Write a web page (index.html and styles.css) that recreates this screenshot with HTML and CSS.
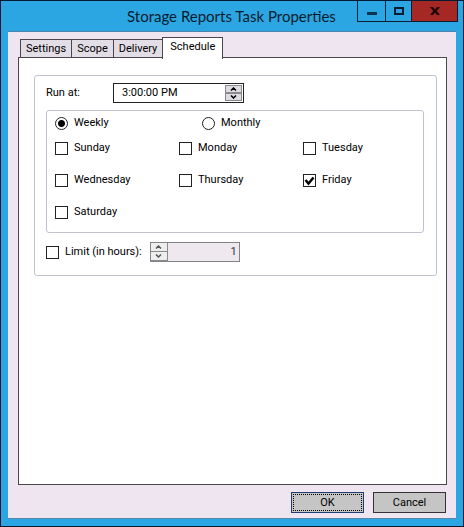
FILE: index.html
```html
<!DOCTYPE html>
<html lang="en">
<head>
<meta charset="utf-8">
<title>Storage Reports Task Properties</title>
<link rel="stylesheet" href="styles.css">
</head>
<body>
<main class="window">
  <header class="titlebar">
    <h1 class="title">Storage Reports Task Properties</h1>
    <div class="window-controls">
      <button class="control" type="button" aria-label="Minimize"><svg width="10" height="10" viewBox="0 0 10 10"><path d="M0 6h10v3H0z" fill="#0b3450"/></svg></button>
      <button class="control" type="button" aria-label="Maximize"><svg width="10" height="8" viewBox="0 0 10 8"><path d="M1 1h8v6H1z" fill="none" stroke="#0a1c30" stroke-width="2"/></svg></button>
      <button class="control control-close" type="button" aria-label="Close"><svg width="10" height="8" viewBox="0 0 10 8"><path d="M0 0h3l2 2.500 2-2.500h3L6.700 4 10 8H7L5 5.500 3 8H0l3.300-4z" fill="#1c0808"/></svg></button>
    </div>
  </header>
  <form class="client">
    <div class="tabs" role="tablist">
      <button class="tab" type="button" role="tab">Settings</button>
      <button class="tab" type="button" role="tab">Scope</button>
      <button class="tab" type="button" role="tab">Delivery</button>
      <button class="tab tab-active" type="button" role="tab" aria-selected="true">Schedule</button>
    </div>
    <section class="panel" role="tabpanel">
      <fieldset class="group schedule">
        <div class="row">
          <label class="run-label" for="run-at">Run at:</label>
          <div class="spinbox">
            <input class="spin-input" id="run-at" type="text" value="3:00:00 PM">
            <div class="spinner">
              <button class="step" type="button" aria-label="Later"><svg width="7" height="4" viewBox="0 0 7 4"><path d="M1 3.500 3.500 1 6 3.500" fill="none" stroke="currentColor" stroke-width="1.500"/></svg></button>
              <button class="step" type="button" aria-label="Earlier"><svg width="7" height="4" viewBox="0 0 7 4"><path d="M1 .5 3.500 3 6 .5" fill="none" stroke="currentColor" stroke-width="1.500"/></svg></button>
            </div>
          </div>
        </div>
        <fieldset class="group recurrence">
          <div class="modes">
            <label class="choice"><input class="radio" type="radio" name="mode" checked>Weekly</label>
            <label class="choice"><input class="radio" type="radio" name="mode">Monthly</label>
          </div>
          <div class="days">
            <label class="choice"><input class="check" type="checkbox">Sunday</label>
            <label class="choice"><input class="check" type="checkbox">Monday</label>
            <label class="choice"><input class="check" type="checkbox">Tuesday</label>
            <label class="choice"><input class="check" type="checkbox">Wednesday</label>
            <label class="choice"><input class="check" type="checkbox">Thursday</label>
            <label class="choice choice-checked"><input class="check" type="checkbox" checked><svg class="tick" width="11" height="11" viewBox="0 0 11 11"><path d="M1.500 5 4.500 8.500 9.500 2.500" fill="none" stroke="#000" stroke-width="2.500"/></svg>Friday</label>
            <label class="choice"><input class="check" type="checkbox">Saturday</label>
          </div>
        </fieldset>
        <div class="row limit">
          <label class="choice"><input class="check" type="checkbox">Limit (in hours):</label>
          <div class="spinbox spinbox-disabled">
            <div class="spinner">
              <button class="step" type="button" aria-label="Increase" disabled><svg width="7" height="4" viewBox="0 0 7 4"><path d="M1 3.500 3.500 1 6 3.500" fill="none" stroke="currentColor" stroke-width="1.500"/></svg></button>
              <button class="step" type="button" aria-label="Decrease" disabled><svg width="7" height="4" viewBox="0 0 7 4"><path d="M1 .5 3.500 3 6 .5" fill="none" stroke="currentColor" stroke-width="1.500"/></svg></button>
            </div>
            <input class="spin-input" type="text" value="1" aria-label="Limit in hours" disabled>
          </div>
        </div>
      </fieldset>
    </section>
    <footer class="actions">
      <button class="action action-default" type="submit"><span class="focus">OK</span></button>
      <button class="action" type="button"><span class="focus">Cancel</span></button>
    </footer>
  </form>
</main>
</body>
</html>
```
FILE: styles.css
```css
* {
  box-sizing: border-box;
}

body {
  margin: 0;
  font: 11px/14px Roboto, "Liberation Sans", sans-serif;
  color: #000;
}

button,
input {
  margin: 0;
  padding: 0;
  font: inherit;
  color: inherit;
}

svg {
  display: block;
}

.window {
  display: flex;
  flex-direction: column;
  min-height: 100vh;
  padding: 0 7px 7px;
  background: #2ca6e2;
  border: 1px solid #061a30;
}

.titlebar {
  display: flex;
  align-items: flex-start;
  height: 30px;
}

.title {
  flex: 1;
  min-width: 0;
  margin: 0;
  padding-left: 119px;
  font: 15px/30px Lato, "Open Sans", sans-serif;
  color: #041c2e;
  white-space: nowrap;
}

.window-controls {
  display: flex;
  flex: none;
  margin-right: -2px;
  border: 1px solid #0a1c30;
  border-top: 0;
}

.control {
  display: flex;
  align-items: center;
  justify-content: center;
  width: 28px;
  height: 20px;
  background: transparent;
  border: 0;
  border-right: 1px solid #0a1c30;
}

.control:nth-child(2) {
  width: 26px;
}

.control-close {
  width: 45px;
  background: #a52824;
  border-right: 0;
}

.client {
  display: flex;
  flex: 1;
  flex-direction: column;
  padding: 5px 9px 5px 10px;
  background: #eee5f0;
  border-top: 1px solid #4d82ab;
  border-bottom: 1px solid #5a87a8;
}

.tabs {
  display: flex;
  align-items: flex-end;
  height: 22px;
  margin-bottom: -2px;
  padding-left: 2px;
  z-index: 1;
}

.tab {
  height: 19px;
  margin-right: -1px;
  margin-bottom: 1px;
  padding: 0 5px;
  background: #e3dde5;
  border: 1px solid #4a464c;
}

.tab-active {
  height: 22px;
  margin-bottom: 0;
  padding: 0 7px 3px;
  background: #fff;
  border-bottom: 0;
}

.panel {
  flex: 1;
  padding: 17px 9px 17px 15px;
  background: #fff;
  border: 1px solid #4a464c;
}

.group {
  min-width: 0;
  margin: 0;
  border: 1px solid #c0c2cf;
  border-radius: 3px;
}

.schedule {
  padding: 7px 12px 13px 11px;
}

.row {
  display: flex;
  align-items: center;
}

.run-label {
  width: 67px;
}

.spinbox {
  display: flex;
  width: 131px;
  height: 20px;
  padding: 1px;
  background: #fff;
  border: 1px solid #222;
}

.spin-input {
  flex: 1;
  min-width: 0;
  padding-left: 7px;
  background: transparent;
  border: 0;
}

.spinner {
  display: flex;
  flex-direction: column;
  width: 17px;
}

.step {
  display: flex;
  flex: 1;
  align-items: center;
  justify-content: center;
  background: #dedce2;
  border: 1px solid #8a8a8e;
}

.recurrence {
  margin-top: 7px;
  padding: 5px 8px 13px;
}

.choice {
  display: flex;
  align-items: center;
  gap: 6px;
}

.modes {
  display: grid;
  grid-template-columns: 147px 1fr;
}

.days {
  display: grid;
  grid-template-columns: 124px 124px 1fr;
  row-gap: 18px;
  margin-top: 11px;
}

.check,
.radio {
  appearance: none;
  flex: none;
  width: 13px;
  height: 13px;
  background: #fff;
  border: 1px solid #222;
}

.radio {
  border-radius: 50%;
}

.radio:checked {
  background: radial-gradient(circle, #000 3px, #fff 4px);
}

.choice-checked {
  position: relative;
}

.tick {
  position: absolute;
  left: 1px;
}

.limit {
  margin-top: 9px;
  gap: 8px;
}

.spinbox-disabled {
  width: 90px;
  padding: 0;
  background: #efe8ee;
  border-color: #858389;
}

.spinbox-disabled .spin-input {
  padding: 0 2px;
  text-align: right;
  color: #333;
}

.spinbox-disabled .step {
  color: #555;
  background: #eee;
  border-width: 0 1px 1px 0;
}

.actions {
  display: flex;
  justify-content: flex-end;
  gap: 9px;
  margin-top: 7px;
  padding-right: 1px;
}

.action {
  display: flex;
  width: 73px;
  height: 21px;
  padding: 1px;
  background: #c4c5c4;
  border: 1px solid #333;
}

.action-default {
  border-color: #1f3d70;
}

.focus {
  flex: 1;
  border: 1px solid transparent;
  line-height: 15px;
}

.action-default .focus {
  border: 1px dotted #000;
}
```
